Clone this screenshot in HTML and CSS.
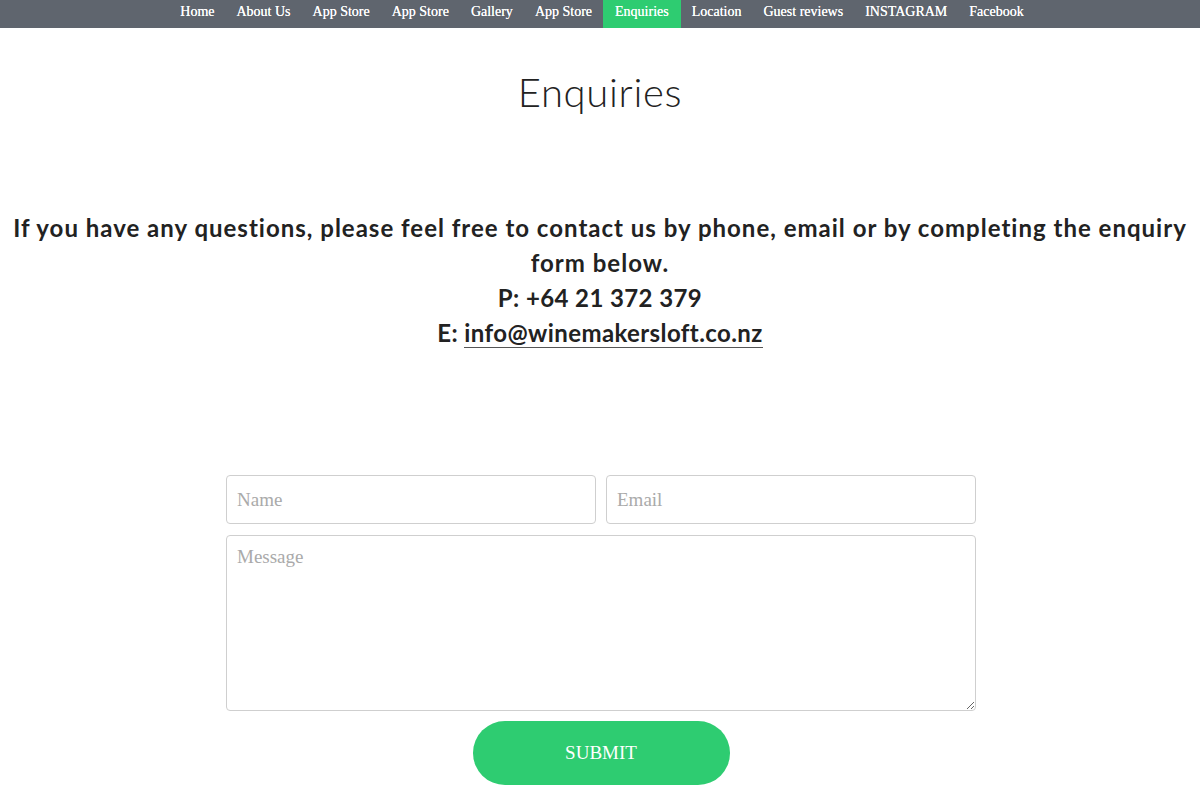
FILE: index.html
```html
<!DOCTYPE html>
<html lang="en">
<head>
<meta charset="utf-8">
<title>Enquiries</title>
<link rel="stylesheet" href="styles.css">
</head>
<body>
<nav class="topnav">
  <ul class="menu">
    <li><a href="#">Home</a></li>
    <li><a href="#">About Us</a></li>
    <li><a href="#">App Store</a></li>
    <li><a href="#">App Store</a></li>
    <li><a href="#">Gallery</a></li>
    <li><a href="#">App Store</a></li>
    <li class="active"><a href="#">Enquiries</a></li>
    <li><a href="#">Location</a></li>
    <li><a href="#">Guest reviews</a></li>
    <li><a href="#">INSTAGRAM</a></li>
    <li><a href="#">Facebook</a></li>
  </ul>
</nav>
<main class="content">
  <h1 class="title">Enquiries</h1>
  <div class="intro">
    <p>If you have any questions, please feel free to contact us by phone, email or by completing the enquiry form below.<br>
    <span class="contact">P: +64 21 372 379</span><br>
    <span class="contact">E: <a class="mail" href="#">info@winemakersloft.co.nz</a></span></p>
  </div>
  <form class="enquiry">
    <div class="row">
      <input class="field" type="text" placeholder="Name">
      <input class="field" type="text" placeholder="Email">
    </div>
    <textarea class="field message" placeholder="Message"></textarea>
    <button class="submit" type="button">SUBMIT</button>
  </form>
</main>
</body>
</html>
```
FILE: styles.css
```css
* { box-sizing: border-box; }
html, body { margin: 0; padding: 0; background: #fff; }
body { font-family: "Lato", sans-serif; color: #222; }

.topnav { background: #5f656e; height: 28px; }
.menu {
  list-style: none; margin: 0; padding: 0;
  display: flex; justify-content: center; height: 28px;
  padding-left: 4px;
}
.menu li { height: 28px; }
.menu a {
  display: block; height: 28px; line-height: 23px;
  padding: 0 11px;
  font-family: "Liberation Serif", serif; font-size: 14px; font-weight: normal;
  color: #fff; text-decoration: none;
  text-shadow: 0 0 0.4px #fff;
}
.menu li.active a { background: #2ecc71; padding: 0 12px; }

.content { text-align: center; }
.title {
  margin: 0; padding-top: 40px;
  font-family: "Lato", sans-serif; font-weight: 300;
  font-size: 40px; line-height: 48px; color: #222;
  letter-spacing: 0.7px;
}
.intro { padding-top: 94px; }
.intro p {
  margin: 0; padding: 0 8px;
  font-family: "Lato", sans-serif; font-weight: 700;
  font-size: 24px; line-height: 35px; color: #222;
  letter-spacing: 1px;
}
.contact { letter-spacing: 0.4px; }
.mail { color: #222; text-decoration: none; border-bottom: 1px solid #555; }

.enquiry {
  width: 752px; margin: 125px auto 0; padding-left: 2px;
  display: flex; flex-direction: column; align-items: center;
}
.row { display: flex; gap: 10px; width: 100%; margin-bottom: 11px; }
.field {
  display: block; width: 100%; height: 49px;
  border: 1px solid #cfcfcf; border-radius: 4px;
  padding: 10px 10px;
  font-family: "Liberation Serif", serif; font-size: 19px; color: #333;
  background: #fff;
}
.field::placeholder { color: #aaa; }
.message { height: 176px; resize: vertical; padding-top: 10px; }
.submit {
  margin-top: 10px; width: 257px; height: 64px;
  border: 0; border-radius: 32px; background: #2ecc71;
  color: #fff; font-family: "Liberation Serif", serif; font-size: 19px;
}
```
